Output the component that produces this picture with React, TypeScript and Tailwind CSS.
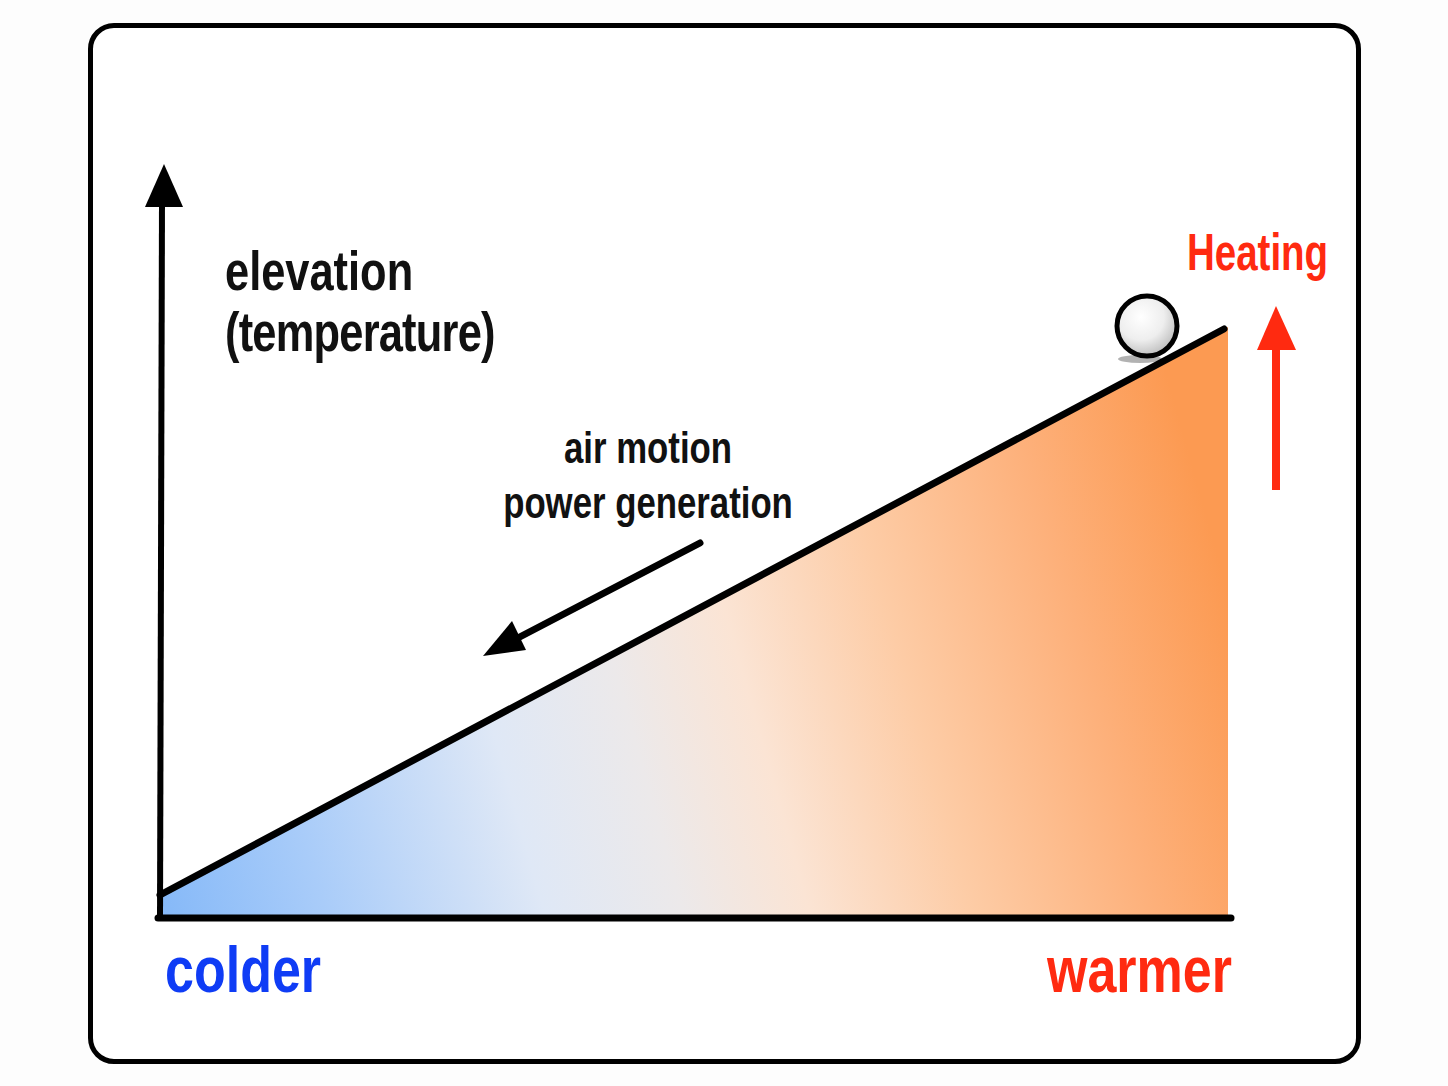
import React from 'react';

// page coords of the frame's inner box, used as the svg viewBox origin
const OX = 93;
const OY = 28;

const label = "absolute font-bold whitespace-nowrap leading-none font-['Liberation_Sans',Arial,sans-serif]";

function Diagram() {
  return (
    <svg className="absolute inset-0 w-full h-full" viewBox={`${OX} ${OY} 1263 1031`}>
      <defs>
        <linearGradient id="temp" x1="160" y1="900" x2="1230" y2="600" gradientUnits="userSpaceOnUse">
          <stop offset="0" stopColor="#86b9f8" />
          <stop offset="0.14" stopColor="#a9ccf9" />
          <stop offset="0.33" stopColor="#dfe8f6" />
          <stop offset="0.45" stopColor="#ece9ea" />
          <stop offset="0.56" stopColor="#fbe4d4" />
          <stop offset="0.7" stopColor="#fdcca6" />
          <stop offset="0.86" stopColor="#fdb07a" />
          <stop offset="1" stopColor="#fc9a52" />
        </linearGradient>
        <radialGradient id="ball" cx="0.4" cy="0.35" r="0.7">
          <stop offset="0" stopColor="#ffffff" />
          <stop offset="0.55" stopColor="#eeeeee" />
          <stop offset="1" stopColor="#b8b8b8" />
        </radialGradient>
      </defs>

      {/* warm/cold wedge */}
      <polygon points="160,895 1228,327 1228,918 160,918" fill="url(#temp)" />

      {/* axes */}
      <line x1="162" y1="200" x2="160" y2="918" stroke="#000" strokeWidth="6" />
      <polygon points="164,164 145,207 183,207" fill="#000" />
      <line x1="158" y1="918" x2="1231" y2="918" stroke="#000" strokeWidth="7" strokeLinecap="round" />

      {/* slope */}
      <line x1="160" y1="895" x2="1224" y2="329" stroke="#000" strokeWidth="7" strokeLinecap="round" />

      {/* ball */}
      <ellipse cx="1140" cy="359" rx="22" ry="4" fill="#000" opacity="0.3" />
      <circle cx="1147" cy="326" r="30" fill="url(#ball)" stroke="#000" strokeWidth="5" />

      {/* air motion arrow */}
      <line x1="700" y1="543" x2="512" y2="641" stroke="#000" strokeWidth="7" strokeLinecap="round" />
      <polygon points="483,656 512,621 526,650" fill="#000" />

      {/* heating arrow */}
      <line x1="1276" y1="490" x2="1276" y2="345" stroke="#ff2a10" strokeWidth="8" />
      <polygon points="1276,306 1257,350 1296,350" fill="#ff2a10" />
    </svg>
  );
}

export default function App() {
  return (
    <div className="min-h-[1086px] w-[1448px] bg-[#fdfdfd] pt-[23px] pl-[88px]">
      <div className="relative w-[1273px] h-[1041px] border-[5px] border-black rounded-[26px] bg-white">
        <Diagram />
        <div className={`${label} left-[132px] top-[215px] text-[56px] text-[#111] origin-left scale-x-[0.775]`}>
          <div>elevation</div>
          <div className="mt-[5px] tracking-[-1px]">(temperature)</div>
        </div>
        <div className={`${label} left-[355px] top-[398px] w-[400px] text-center text-[44px] text-[#111] scale-x-[0.79]`}>
          <div>air motion</div>
          <div className="mt-[11px]">power generation</div>
        </div>
        <div className={`${label} left-[1094px] top-[198px] text-[52px] text-[#ff2a10] origin-left scale-x-[0.74]`}>Heating</div>
        <div className={`${label} left-[72px] top-[909px] text-[65px] text-[#0f3cf5] origin-left scale-x-[0.8]`}>colder</div>
        <div className={`${label} left-[954px] top-[909px] text-[65px] text-[#ff2a10] origin-left scale-x-[0.8]`}>warmer</div>
      </div>
    </div>
  );
}
